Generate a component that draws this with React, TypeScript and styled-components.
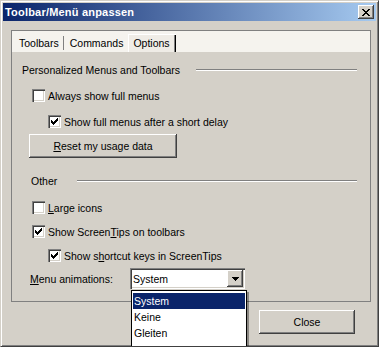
import React from "react";
import styled, { createGlobalStyle } from "styled-components";

const Global = createGlobalStyle`
  html, body {
    margin: 0;
    padding: 0;
    background: #d4d0c8;
  }
  body {
    font-family: "Liberation Sans", Arial, sans-serif;
    font-size: 10.5px;
    color: #000;
  }
`;

const Window = styled.div`
  position: relative;
  width: 379px;
  height: 347px;
  box-sizing: border-box;
  background: #d4d0c8;
  border-top: 1px solid #d4d0c8;
  border-left: 1px solid #d4d0c8;
  border-right: 1px solid #404040;
  border-bottom: 1px solid #404040;
  box-shadow: inset 1px 1px #fff, inset -1px -1px #808080;
  padding: 2px;
  display: flex;
  flex-direction: column;
  overflow: hidden;
`;

const TitleBar = styled.div`
  height: 18px;
  display: flex;
  align-items: center;
  justify-content: space-between;
  padding: 0 2px;
  background: linear-gradient(to right, #0a246a, #a6caf0);
`;

const Title = styled.span`
  color: #fff;
  font-weight: bold;
  font-size: 11px;
  letter-spacing: 0.2px;
`;

const CaptionButton = styled.div`
  width: 16px;
  height: 14px;
  box-sizing: border-box;
  background: #d4d0c8;
  box-shadow: inset -1px -1px #404040, inset 1px 1px #fff, inset -2px -2px #808080;
  display: flex;
  align-items: center;
  justify-content: center;
`;

const Body = styled.div`
  flex: 1;
  display: flex;
  flex-direction: column;
  padding: 9px 0 0 8px;
`;

const TabControl = styled.div`
  width: 360px;
  height: 272px;
  box-sizing: border-box;
  border: 1px solid #808080;
  display: flex;
  flex-direction: column;
`;

const TabStrip = styled.div`
  height: 21px;
  box-sizing: border-box;
  background: #f5f3ee;
  padding: 3px 0 0 1px;
  display: flex;
  align-items: stretch;
`;

const Tab = styled.div<{ $selected?: boolean; $last?: boolean }>`
  display: flex;
  align-items: center;
  padding: ${(p) => (p.$selected ? "0 6px 0 5px" : "0 5px 0 6px")};
  position: relative;
  background: ${(p) => (p.$selected ? "#efece6" : "transparent")};
  box-shadow: ${(p) =>
    p.$selected ? "inset 1px 1px #fff, inset -1px 0 #000, inset -2px 0 #808080" : "none"};
  &::after {
    content: "";
    display: ${(p) => (p.$selected || p.$last ? "none" : "block")};
    position: absolute;
    right: 0;
    top: 2px;
    bottom: 2px;
    width: 1px;
    background: #808080;
  }
`;

const Panel = styled.div`
  flex: 1;
  display: flex;
  flex-direction: column;
  padding: 0 13px 0 0;
`;

const GroupHeader = styled.div<{ $indent: number; $top: number; $gap: number }>`
  display: flex;
  align-items: center;
  height: 14px;
  margin-top: ${(p) => p.$top}px;
  padding-left: ${(p) => p.$indent}px;
  gap: ${(p) => p.$gap}px;
`;

const Rule = styled.div`
  flex: 1;
  height: 1px;
  background: #808080;
  border-bottom: 1px solid #fff;
`;

const CheckRow = styled.label<{ $indent: number; $top: number }>`
  display: flex;
  align-items: center;
  height: 13px;
  gap: 3px;
  margin-top: ${(p) => p.$top}px;
  padding-left: ${(p) => p.$indent}px;
  white-space: nowrap;
`;

const Box = styled.span`
  width: 13px;
  height: 13px;
  box-sizing: border-box;
  background: #fff;
  box-shadow: inset 1px 1px #808080, inset 2px 2px #404040, inset -1px -1px #fff,
    inset -2px -2px #d4d0c8;
  display: flex;
  align-items: center;
  justify-content: center;
  flex-shrink: 0;
`;

const Button = styled.div<{ $width: number }>`
  width: ${(p) => p.$width}px;
  height: 24px;
  box-sizing: border-box;
  background: #d4d0c8;
  box-shadow: inset -1px -1px #404040, inset 1px 1px #fff, inset -2px -2px #808080;
  display: flex;
  align-items: center;
  justify-content: center;
`;

const ButtonRow = styled.div<{ $indent: number; $top: number }>`
  display: flex;
  margin-top: ${(p) => p.$top}px;
  padding-left: ${(p) => p.$indent}px;
`;

const FieldRow = styled.div<{ $top: number }>`
  display: flex;
  align-items: center;
  margin-top: ${(p) => p.$top}px;
  padding-left: 18px;
`;

const FieldLabel = styled.span`
  width: 100px;
`;

const Combo = styled.div`
  width: 115px;
  height: 21px;
  box-sizing: border-box;
  background: #fff;
  box-shadow: inset 1px 1px #808080, inset 2px 2px #404040, inset -1px -1px #fff,
    inset -2px -2px #d4d0c8;
  display: flex;
  align-items: center;
  padding: 2px;
`;

const ComboText = styled.span`
  flex: 1;
  padding-left: 1px;
`;

const ComboArrow = styled.div`
  width: 16px;
  height: 17px;
  box-sizing: border-box;
  background: #d4d0c8;
  box-shadow: inset -1px -1px #404040, inset 1px 1px #fff, inset -2px -2px #808080;
  display: flex;
  align-items: center;
  justify-content: center;
`;

const Footer = styled.div`
  display: flex;
  justify-content: flex-end;
  padding: 8px 21px 0 0;
`;

const Popup = styled.div`
  position: absolute;
  left: 130px;
  top: 289px;
  width: 116px;
  height: 62px;
  box-sizing: border-box;
  background: #fff;
  border: 1px solid #000;
  padding: 2px 1px;
  box-shadow: 2px 2px 0 rgba(0, 0, 0, 0.35);
  display: flex;
  flex-direction: column;
`;

const Option = styled.div<{ $selected?: boolean }>`
  height: 16px;
  display: flex;
  align-items: center;
  padding-left: 1px;
  background: ${(p) => (p.$selected ? "#0a246a" : "transparent")};
  color: ${(p) => (p.$selected ? "#fff" : "#000")};
`;

const CloseGlyph = () => (
  <svg width="8" height="7" viewBox="0 0 8 7" shapeRendering="crispEdges">
    <path
      d="M0 0h2v1H0zM6 0h2v1H6zM1 1h2v1H1zM5 1h2v1H5zM2 2h4v1H2zM3 3h2v1H3zM2 4h4v1H2zM1 5h2v1H1zM5 5h2v1H5zM0 6h2v1H0zM6 6h2v1H6z"
      fill="#000"
    />
  </svg>
);

const Check = () => (
  <svg width="7" height="7" viewBox="0 0 7 7" shapeRendering="crispEdges">
    <path d="M6 0h1v1H6zM5 1h2v1H5zM0 2h1v1H0zM4 2h3v1H4zM0 3h2v1H0zM3 3h3v1H3zM0 4h5v1H0zM1 5h3v1H1zM2 6h1v1H2z" fill="#000" />
  </svg>
);

const DownArrow = () => (
  <svg width="7" height="4" viewBox="0 0 7 4" shapeRendering="crispEdges">
    <path d="M0 0h7v1H0zM1 1h5v1H1zM2 2h3v1H2zM3 3h1v1H3z" fill="#000" />
  </svg>
);

const CheckBox = ({ checked }: { checked?: boolean }) => <Box>{checked && <Check />}</Box>;

export default function App() {
  return (
    <>
      <Global />
      <Window>
        <TitleBar>
          <Title>Toolbar/Menü anpassen</Title>
          <CaptionButton>
            <CloseGlyph />
          </CaptionButton>
        </TitleBar>
        <Body>
          <TabControl>
            <TabStrip>
              <Tab>Toolbars</Tab>
              <Tab $last>Commands</Tab>
              <Tab $selected>Options</Tab>
            </TabStrip>
            <Panel>
              <GroupHeader $indent={10} $top={11} $gap={16}>
                <span>Personalized Menus and Toolbars</span>
                <Rule />
              </GroupHeader>
              <CheckRow $indent={20} $top={12}>
                <CheckBox />
                <span>Always show full menus</span>
              </CheckRow>
              <CheckRow $indent={36} $top={13}>
                <CheckBox checked />
                <span>Show full menus after a short delay</span>
              </CheckRow>
              <ButtonRow $indent={17} $top={6}>
                <Button $width={148}>
                  <span>
                    <u>R</u>eset my usage data
                  </span>
                </Button>
              </ButtonRow>
              <GroupHeader $indent={19} $top={16} $gap={20}>
                <span>Other</span>
                <Rule />
              </GroupHeader>
              <CheckRow $indent={20} $top={13}>
                <CheckBox />
                <span>
                  <u>L</u>arge icons
                </span>
              </CheckRow>
              <CheckRow $indent={20} $top={11}>
                <CheckBox checked />
                <span>
                  Show Screen<u>T</u>ips on toolbars
                </span>
              </CheckRow>
              <CheckRow $indent={36} $top={11}>
                <CheckBox checked />
                <span>
                  Show s<u>h</u>ortcut keys in ScreenTips
                </span>
              </CheckRow>
              <FieldRow $top={6}>
                <FieldLabel>
                  <u>M</u>enu animations:
                </FieldLabel>
                <Combo>
                  <ComboText>System</ComboText>
                  <ComboArrow>
                    <DownArrow />
                  </ComboArrow>
                </Combo>
              </FieldRow>
            </Panel>
          </TabControl>
          <Footer>
            <Button $width={96}>Close</Button>
          </Footer>
        </Body>
        <Popup>
          <Option $selected>System</Option>
          <Option>Keine</Option>
          <Option>Gleiten</Option>
        </Popup>
      </Window>
    </>
  );
}
